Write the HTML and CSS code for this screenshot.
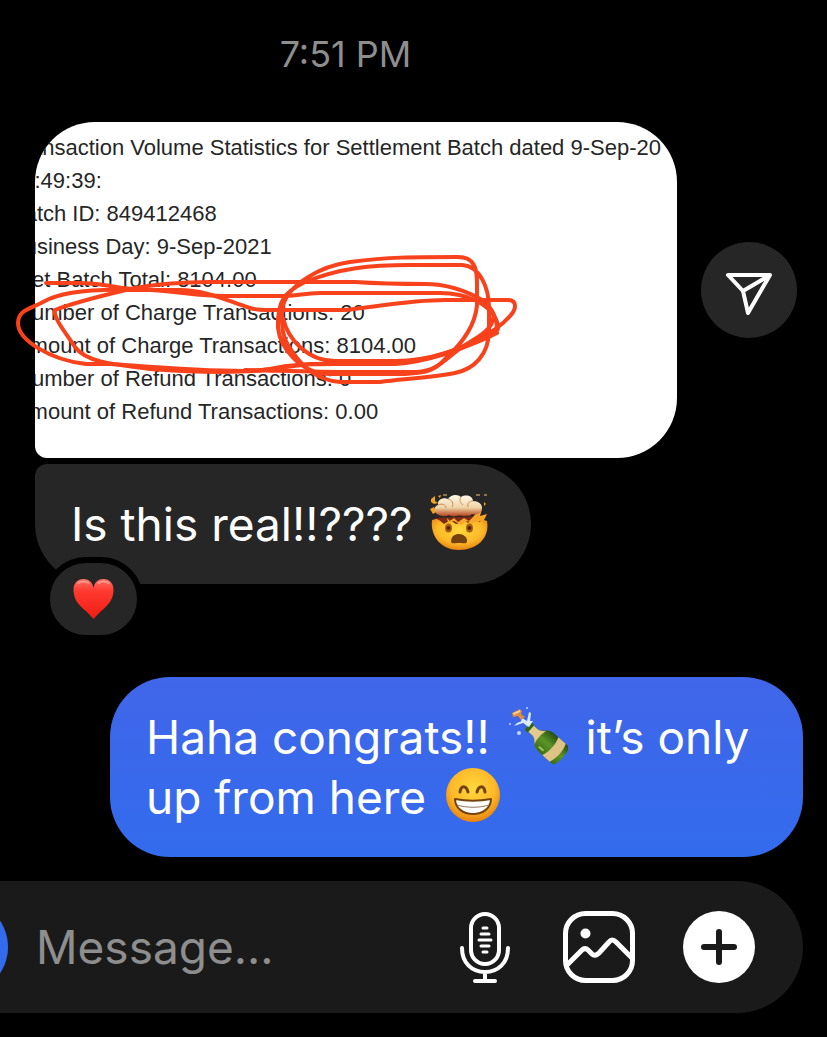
FILE: index.html
```
<!DOCTYPE html>
<html lang="en">
    <head>
        <meta charset="utf-8">
        <title>Messages</title>
        <meta name="viewport" content="width=device-width, initial-scale=1">
        <link rel="stylesheet" href="styles.css">
    </head>
    <body>
        <main class="chat">
            <time class="timestamp">7:51 PM</time>

            <div class="received">
                <div class="photo-row">
                    <div class="photo">
                        <div class="statement">
                            <p>Transaction Volume Statistics for Settlement Batch dated 9-Sep-20</p>
                            <p>17:49:39:</p>
                            <p>Batch ID: 849412468</p>
                            <p>Business Day: 9-Sep-2021</p>
                            <p> Net Batch Total: 8104.00</p>
                            <p> Number of Charge Transactions: 20</p>
                            <p> Amount of Charge Transactions: 8104.00</p>
                            <p> Number of Refund Transactions: 0</p>
                            <p> Amount of Refund Transactions: 0.00</p>
                        </div>
                        <svg class="scribble" viewBox="0 240 540 160" aria-hidden="true">
                            <path d="M46 283H80C105 283 120 290 150 290C185 292 195 296 225 296H285C300 296 303 293 320 293H440C465 293 492 303 498 325C500 333 488 338 470 344"/>
                            <path d="M55 310C75 302 105 295 130 289C155 284 180 282 210 282H355C385 284 390 284 425 284C450 284 472 294 484 301C496 312 500 330 494 332C460 350 430 361 395 361H335C308 361 288 340 283 318"/>
                            <path d="M55 310C53 318 66 333 75 347C85 361 108 364 150 369C200 373 250 373 270 369C290 364 310 364 335 364H395C430 362 470 346 497 333"/>
                            <path d="M345 310C375 307 410 300 445 300H508C518 300 516 310 510 316C495 334 455 353 420 360C390 366 340 363 310 364C288 366 270 371 245 371C190 371 140 366 110 364H86C50 360 18 340 18 323C18 310 30 309 43 302C62 291 95 289 130 290H180C205 290 225 300 250 308C256 310 262 310 270 310H345"/>
                            <path d="M283 306C288 285 320 266 350 262C390 257 410 257 458 257C474 257 477 268 477 283V305C475 330 455 350 445 359C435 370 428 373 405 374H330C300 374 280 347 278 328C277 300 285 292 305 282C340 268 370 265 410 265H462C480 266 489 288 489 308V330C489 355 474 369 455 373C430 378 400 379 380 382H340C315 380 300 365 288 345C282 335 281 320 283 306"/>
                            <path d="M245 370C290 371 320 372 350 372H415C440 372 447 355 470 342C480 336 493 328 493 318"/>
                        </svg>
                    </div>
                    <button class="share" type="button" aria-label="Share">
                        <svg viewBox="0 0 48 48">
                            <path d="M3 4H45L23 42L18 20ZM45 4L18 20"/>
                        </svg>
                    </button>
                </div>

                <div class="bubble bubble-in">
                    Is this real!!????
                    <svg class="emoji" viewBox="0 0 60 60" role="img" aria-label="exploding head">
                        <defs>
                            <radialGradient id="face" cx="50%" cy="38%" r="62%">
                                <stop offset="0" stop-color="#ffd83c"/>
                                <stop offset=".65" stop-color="#fdb928"/>
                                <stop offset="1" stop-color="#e8820e"/>
                            </radialGradient>
                            <linearGradient id="cloud" x1="0" y1="0" x2="0" y2="1">
                                <stop offset="0" stop-color="#fffbe8"/>
                                <stop offset=".6" stop-color="#eed3a6"/>
                                <stop offset="1" stop-color="#b8441a"/>
                            </linearGradient>
                        </defs>
                        <path fill="url(#face)" d="M2 26L10 24L15 29L21 26L27 30L34 25L42 28L51 25L57 27C60 44 47 56 29 56C12 56 0 43 2 26Z"/>
                        <path fill="#7c2a12" d="M4 24L53 22L50 28L44 25L38 29L33 25L26 30L20 26L14 30L9 26Z"/>
                        <path fill="#f7a62a" d="M17 24L20 27L24 24L28 28L34 24L39 27L43 23L48 17L52 15L50 22L57 20L54 26L42 29L37 27L31 31L24 27L18 29Z"/>
                        <path fill="url(#cloud)" d="M9 21C3 19 3 13 8 11C7 6 13 3 18 5C21 0 28 0 31 3C36 0 43 2 43 7C50 7 54 12 51 17C49 21 45 21 42 20C39 23 36 21 34 22C28 20 23 24 19 21C15 23 11 22 9 21Z"/>
                        <path fill="none" stroke="#cb8c52" stroke-width="1" d="M8 11C12 9 16 11 16 14M18 5C22 6 24 9 22 13M31 3C29 6 30 9 33 11M43 7C39 7 37 10 38 13"/>
                        <path fill="#f1a31f" d="M1 5L5 2L5 7L8 9L4 10L1 8ZM0 15L4 13L6 18L3 20ZM8 2L11 1L10 4ZM54 8L56 10L54 12Z"/>
                        <path stroke="#e9c37d" stroke-width="1" d="M46 1H50M54 1H57M13 1H17"/>
                        <ellipse cx="18.500" cy="34" rx="3.500" ry="4.500" fill="#a75d13"/>
                        <ellipse cx="39.500" cy="34" rx="3.500" ry="4.500" fill="#a75d13"/>
                        <circle cx="18.500" cy="34" r="2" fill="#52270e"/>
                        <circle cx="39.500" cy="34" r="2" fill="#52270e"/>
                        <path fill="#74410f" d="M21 48C21 42 25 40 29 40S38 43 37 48C36 50 34 49 29 49S22 50 21 48Z"/>
                    </svg>
                    <span class="reaction">
                        <svg viewBox="0 0 42 40" role="img" aria-label="heart">
                            <defs>
                                <linearGradient id="heart" x1="0" y1="0" x2="0" y2="1">
                                    <stop offset="0" stop-color="#ff7165"/>
                                    <stop offset=".3" stop-color="#ff3a30"/>
                                    <stop offset="1" stop-color="#ee1c12"/>
                                </linearGradient>
                            </defs>
                            <path fill="url(#heart)" d="M21 40C19 38 16 34 11 30C4 24 1 18 1 11C1 4 5 0 11 0C16 0 20 3 21 9C22 3 26 0 31 0C37 0 41 4 41 11C41 18 38 24 31 30C26 34 23 38 21 40Z"/>
                            <path fill="none" stroke="#ffaca4" stroke-width="2" stroke-linecap="round" opacity=".7" d="M6 4C8 2 13 2 16 4M26 4C29 2 34 2 36 4"/>
                        </svg>
                    </span>
                </div>
            </div>

            <div class="bubble bubble-out">
                Haha congrats!!
                <svg class="emoji" viewBox="0 0 60 60" role="img" aria-label="champagne bottle">
                    <defs>
                        <linearGradient id="glass" x1="0" y1="0" x2="1" y2="0">
                            <stop offset="0" stop-color="#3c6d16"/>
                            <stop offset=".5" stop-color="#5b9427"/>
                            <stop offset="1" stop-color="#254c10"/>
                        </linearGradient>
                    </defs>
                    <!-- bottle is drawn upright, then tipped over -->
                    <g transform="translate(20 19) rotate(-48)">
                        <path fill="url(#glass)" d="M-4 0H4V9C4 14 12 17 12 24V42C12 46 8 47 0 47S-12 46 -12 42V24C-12 17 -4 14 -4 9Z"/>
                        <path fill="#e3c98c" d="M-4 4H4V9C4 13 7 15 9 17C4 15 -4 15 -9 17C-7 15 -4 13 -4 9Z"/>
                        <path fill="#dec384" d="M-12 30C-5 33 5 33 12 30V40C5 43 -5 43 -12 40Z"/>
                        <path fill="none" stroke="#9ac45f" stroke-width="2" d="M-8 22V28"/>
                        <rect x="-5" y="0" width="10" height="4" rx="1" fill="#2f6414"/>
                    </g>
                    <path fill="#d9ecff" d="M19 19L13 14L14 11L19 14L21 5L23 6L22 14L25 14L21 20ZM15 16L6 19L9 16L14 14Z"/>
                    <path fill="#dc8d40" d="M4 6L12 2L14 4L13 7L17 10L13 13L10 9L5 10Z"/>
                    <path fill="#ffd096" d="M5 6L12 3L12 5L6 8Z"/>
                    <g fill="#b9d7ff">
                        <circle cx="11" cy="26" r="2"/>
                        <circle cx="2" cy="17" r="1"/>
                        <circle cx="19" cy="1" r="1"/>
                    </g>
                </svg>
                it’s only up from here
                <svg class="emoji" viewBox="0 0 60 60" role="img" aria-label="beaming face">
                    <circle cx="29" cy="28" r="27" fill="url(#face)"/>
                    <path fill="none" stroke="#74420e" stroke-width="3" stroke-linecap="round" d="M16 25C17 18 22 18 24 25M33 25C35 18 40 18 41 25"/>
                    <path fill="#fff" stroke="#74420e" stroke-width="2" stroke-linejoin="round" d="M11 32C22 34 36 34 47 32C47 41 39 47 29 47S11 41 11 32Z"/>
                    <path fill="none" stroke="#8e785d" stroke-width="1" d="M13 38C23 41 35 41 45 38"/>
                </svg>
            </div>

            <form class="composer">
                <button class="camera" type="button" aria-label="Camera"></button>
                <input class="message" type="text" placeholder="Message..." aria-label="Message">
                <button class="tool mic" type="button" aria-label="Record voice">
                    <svg viewBox="0 0 60 72">
                        <rect x="16" y="3" width="28" height="50" rx="14"/>
                        <path d="M7 37C7 52 17 61 30 61S53 52 53 37M30 61V68"/>
                        <path d="M20 70H40"/>
                        <path class="thin" d="M28 17H32M26 23H34M24 29H36M26 35H34M28 41H32"/>
                    </svg>
                </button>
                <button class="tool" type="button" aria-label="Gallery">
                    <svg viewBox="0 0 72 72">
                        <rect x="2.500" y="2.500" width="67" height="67" rx="20"/>
                        <path d="M4 54L19 39Q22 36 25 39L29 43Q32 46 36 42L46 31Q49 27 53 31L69 47"/>
                        <circle class="dot" cx="22.500" cy="22.500" r="5"/>
                    </svg>
                </button>
                <button class="tool" type="button" aria-label="More">
                    <svg viewBox="0 0 72 72">
                        <circle class="disc" cx="36" cy="36" r="36"/>
                        <path class="plus" d="M36 21V51M21 36H51"/>
                    </svg>
                </button>
            </form>
        </main>
    </body>
</html>
```
FILE: styles.css
```
* {
    box-sizing: border-box;
}

body {
    background: #000;
    color: #fff;
    font-family: Inter, "Liberation Sans", sans-serif;
    margin: 0;
}

button {
    background: none;
    border: 0;
    cursor: pointer;
    flex: none;
    padding: 0;
}

svg {
    display: block;
}

.chat {
    display: flex;
    flex-direction: column;
    min-height: 100vh;
    overflow: hidden;
    padding: 32px 24px 24px 0;
}

.timestamp {
    color: #8e8e8e;
    font-size: 36px;
    line-height: 44px;
    padding-right: 112px;
    text-align: center;
}

.received {
    align-items: flex-start;
    display: flex;
    flex-direction: column;
    gap: 6px;
    margin: 46px 0 93px 35px;
}

.photo-row {
    align-items: center;
    align-self: stretch;
    display: flex;
    gap: 24px;
    padding-right: 6px;
}

.photo {
    flex: 1;
    min-width: 0;
    position: relative;
}

.statement {
    background: #fff;
    border-radius: 60px 60px 60px 12px;
    color: #262626;
    font-family: "Liberation Sans", Arial, sans-serif;
    font-size: 22px;
    line-height: 33px;
    overflow: hidden;
    padding: 9px 0 30px;
}

/* the receipt is cropped on its left side */
.statement p {
    margin: 0 0 0 -25px;
    white-space: pre;
}

.scribble {
    fill: none;
    height: 160px;
    left: -35px;
    position: absolute;
    stroke: #f8421c;
    stroke-linecap: round;
    stroke-linejoin: round;
    stroke-width: 4;
    top: 118px;
    width: 540px;
}

.share {
    background: #262626;
    border-radius: 50%;
    height: 96px;
    width: 96px;
}

.share svg {
    fill: none;
    height: 48px;
    margin: 10px auto 0;
    stroke: #fff;
    stroke-linejoin: round;
    stroke-width: 4;
    width: 48px;
}

.bubble {
    border-radius: 60px;
    font-size: 46px;
    line-height: 60px;
    padding: 30px 36px;
    position: relative;
}

.bubble-in {
    background: #262626;
    border-top-left-radius: 12px;
}

.bubble-out {
    background: linear-gradient(#4066e9, #336bed);
    margin-left: 110px;
}

.emoji {
    display: inline-block;
    height: 60px;
    margin: 0 5px;
    vertical-align: -13px;
    width: 60px;
}

.reaction {
    background: #262626;
    border: 6px solid #000;
    border-radius: 42px;
    bottom: -57px;
    left: 9px;
    padding: 16px 22px;
    position: absolute;
}

.reaction svg {
    height: 40px;
    width: 43px;
}

.composer {
    align-items: center;
    background: #1a1a1a;
    border-radius: 66px;
    display: flex;
    gap: 48px;
    height: 132px;
    margin: 24px 0 0 -106px;
    padding: 0 48px 0 18px;
}

.camera {
    background: #336bed;
    border-radius: 50%;
    height: 96px;
    width: 96px;
}

.message {
    background: none;
    border: 0;
    color: #fff;
    flex: 1;
    font-family: inherit;
    font-size: 46px;
    margin-left: -20px;
    min-width: 0;
    outline: 0;
    padding: 0;
}

.message::placeholder {
    color: #8e8e8e;
    opacity: 1;
}

.tool svg {
    fill: none;
    height: 72px;
    stroke: #fff;
    stroke-linecap: round;
    stroke-linejoin: round;
    stroke-width: 5;
    width: 72px;
}

.mic svg {
    stroke-width: 4;
    width: 60px;
}

.tool .thin {
    stroke-width: 3;
}

.tool .dot,
.tool .disc {
    fill: #fff;
    stroke: none;
}

.tool .plus {
    stroke: #1a1a1a;
    stroke-width: 6;
}
```
